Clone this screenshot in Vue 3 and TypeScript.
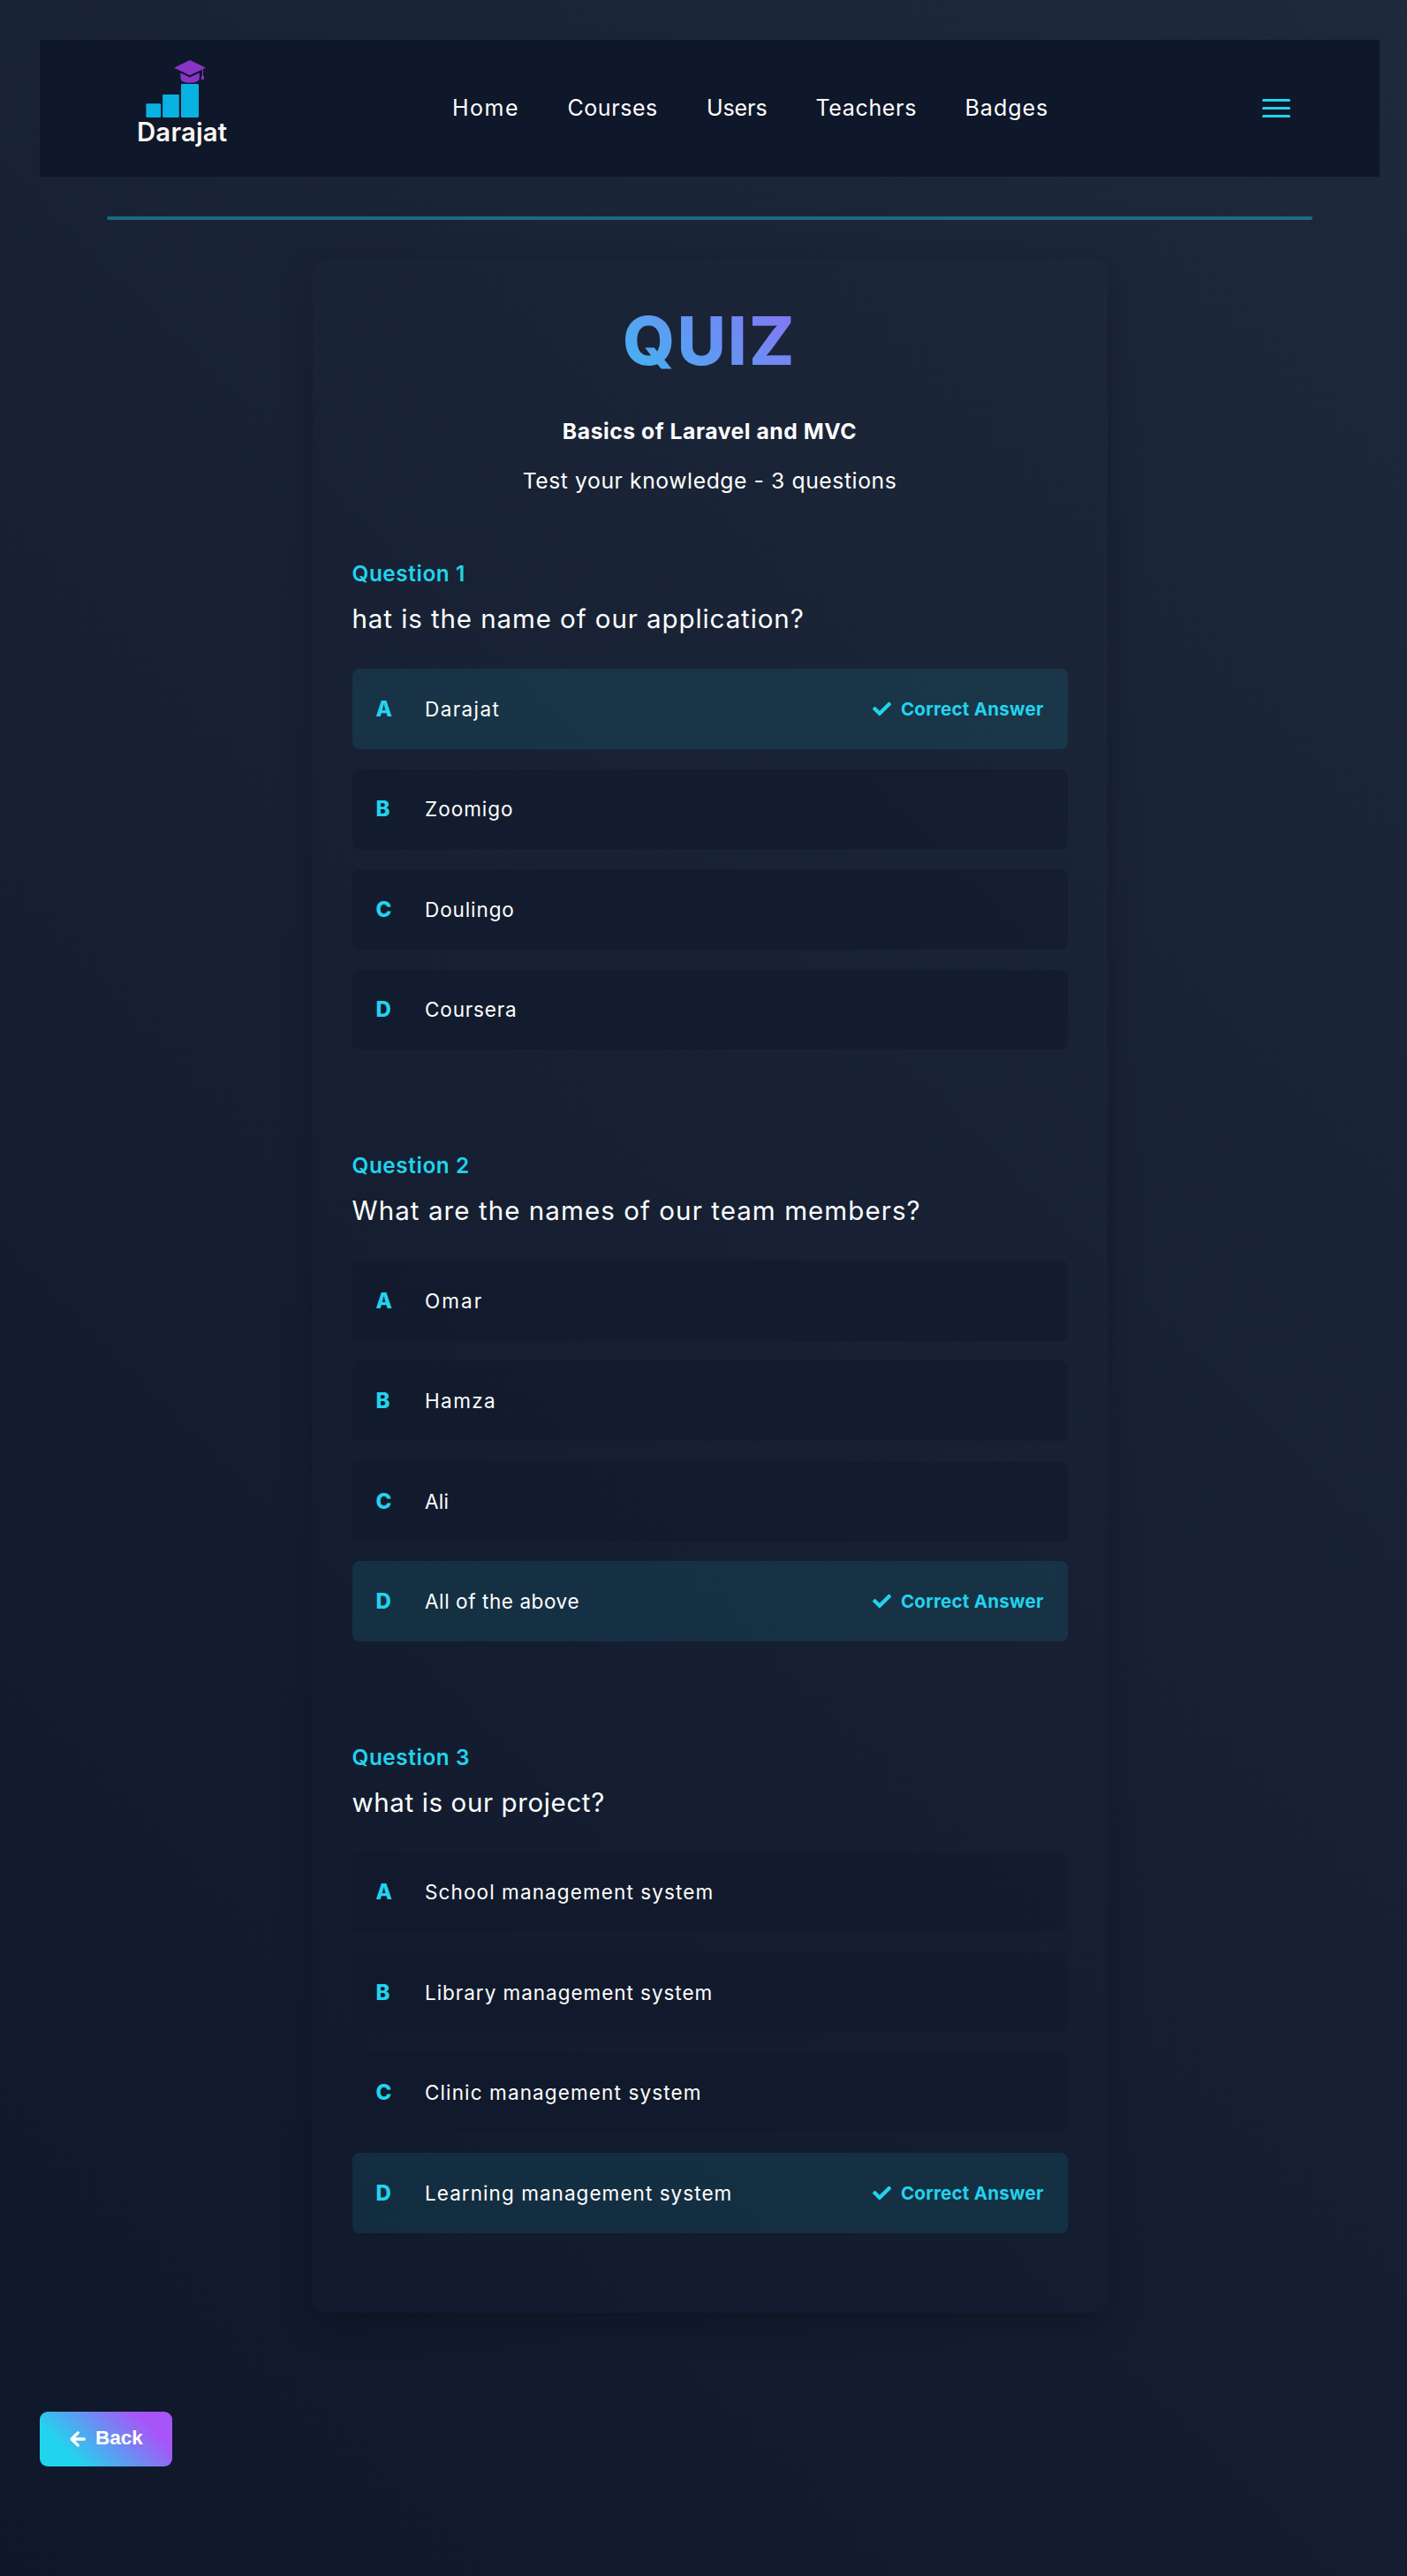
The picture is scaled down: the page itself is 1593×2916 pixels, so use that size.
<script setup lang="ts">
interface NavItem { label: string; width: number; spacing: number }
interface Option { text: string; spacing: number; correct?: boolean }
interface Question { text: string; spacing: number; options: Option[] }

const letters = ['A', 'B', 'C', 'D']

const nav: NavItem[] = [
  { label: 'Home', width: 74.5, spacing: 1.5 },
  { label: 'Courses', width: 101.5, spacing: 0.55 },
  { label: 'Users', width: 67.5, spacing: -0.1 },
  { label: 'Teachers', width: 113, spacing: 0.65 },
  { label: 'Badges', width: 96, spacing: 1.0 },
]

const questions: Question[] = [
  {
    text: 'hat is the name of our application?',
    spacing: 0.92,
    options: [
      { text: 'Darajat', spacing: 1.4, correct: true },
      { text: 'Zoomigo', spacing: 1.0 },
      { text: 'Doulingo', spacing: 0.9 },
      { text: 'Coursera', spacing: 0.85 },
    ],
  },
  {
    text: 'What are the names of our team members?',
    spacing: 1.08,
    options: [
      { text: 'Omar', spacing: 2.1 },
      { text: 'Hamza', spacing: 1.4 },
      { text: 'Ali', spacing: 0.3 },
      { text: 'All of the above', spacing: 0.58, correct: true },
    ],
  },
  {
    text: 'what is our project?',
    spacing: 0.62,
    options: [
      { text: 'School management system', spacing: 1.11 },
      { text: 'Library management system', spacing: 0.96 },
      { text: 'Clinic management system', spacing: 1.12 },
      { text: 'Learning management system', spacing: 1.05, correct: true },
    ],
  },
]
</script>

<template>
  <div class="page">
    <header class="navbar">
      <svg class="logo" width="104" height="104" viewBox="0 0 104 104">
        <g fill="#08b2e3">
          <rect x="8.4" y="49.3" width="16.7" height="15.7" rx="1.2" />
          <rect x="27.1" y="38.9" width="18.7" height="26.1" rx="1.2" />
          <rect x="48" y="27" width="20" height="38" rx="1.2" />
        </g>
        <g fill="#8834c6">
          <path d="M58 0 L76 8.7 L58 17.3 L40 8.7 Z" />
          <path d="M47.4 14.5 L58 19.6 L68.8 14.5 V20.5 Q68.8 25.6 58 25.8 Q47.4 25.6 47.4 20.5 Z" />
          <path d="M71.9 10.5 H73 V17.5 Q74.2 18 74 22 H70.9 Q70.7 18 71.9 17.5 Z" />
        </g>
        <text x="-2" y="92" class="logo-text">Darajat</text>
      </svg>
      <nav class="links">
        <a
          v-for="item in nav"
          :key="item.label"
          class="link"
          :style="{ width: item.width + 'px', letterSpacing: item.spacing + 'px' }"
        >{{ item.label }}</a>
      </nav>
      <div class="burger"><span></span><span></span><span></span></div>
    </header>

    <div class="divider"></div>

    <main class="card">
      <h1 class="title">QUIZ</h1>
      <div class="subtitle">Basics of Laravel and MVC</div>
      <div class="description">Test your knowledge - 3 questions</div>

      <div class="questions">
        <section v-for="(q, i) in questions" :key="q.text" class="question">
          <div class="number">Question {{ i + 1 }}</div>
          <div class="prompt" :style="{ letterSpacing: q.spacing + 'px' }">{{ q.text }}</div>
          <div class="options">
            <div
              v-for="(o, j) in q.options"
              :key="o.text"
              class="option"
              :class="{ correct: o.correct }"
            >
              <span class="letter">{{ letters[j] }}</span>
              <span class="text" :style="{ letterSpacing: o.spacing + 'px' }">{{ o.text }}</span>
              <span v-if="o.correct" class="badge">
                <svg class="check" width="21" height="21" viewBox="0 0 512 512">
                  <path fill="currentColor" d="M173.898 439.404l-166.4-166.4c-9.997-9.997-9.997-26.206 0-36.204l36.203-36.204c9.997-9.998 26.207-9.998 36.204 0L192 312.69 432.095 72.596c9.997-9.997 26.207-9.997 36.204 0l36.203 36.204c9.997 9.997 9.997 26.206 0 36.204l-294.4 294.401c-9.998 9.997-26.207 9.997-36.204-.001z" />
                </svg>
                Correct Answer
              </span>
            </div>
          </div>
        </section>
      </div>
    </main>

    <button class="back">
      <svg width="18" height="18" viewBox="0 0 18 18" fill="none" stroke="#fff" stroke-width="3.3" stroke-linecap="round" stroke-linejoin="round">
        <path d="M16.3 9H2.2M9.2 1.9L2.1 9l7.1 7.1" />
      </svg>
      <span>Back</span>
    </button>
  </div>
</template>

<style>
body {
  margin: 0;
  background: #0f172a;
}
</style>

<style scoped>
.page {
  box-sizing: border-box;
  width: 1593px;
  height: 2916px;
  padding: 45px 31px 0 45px;
  display: flex;
  flex-direction: column;
  background: linear-gradient(45deg, #0f172a, #1e293b);
  font-family: Inter, sans-serif;
  color: #fff;
}

.navbar {
  box-sizing: border-box;
  height: 155px;
  padding: 0 101px 0 112px;
  display: flex;
  align-items: center;
  background: #0f172a;
}

.logo {
  flex: none;
  align-self: flex-start;
  margin-top: 23px;
  overflow: visible;
}

.logo-text {
  font: 600 29.3px Inter, sans-serif;
  letter-spacing: 0.2px;
  fill: #fdf6ef;
}

.links {
  display: flex;
  gap: 56px;
  margin-left: 251px;
}

.link {
  font-size: 25px;
  line-height: 36px;
  padding-bottom: 1px;
  white-space: nowrap;
}

.burger {
  margin-left: auto;
  width: 32px;
  display: flex;
  flex-direction: column;
  gap: 6px;
}

.burger span {
  height: 3px;
  border-radius: 1.5px;
  background: #22d3ee;
}

.divider {
  width: 1365px;
  height: 4px;
  margin: 45px auto;
  border-radius: 2px;
  background: rgba(34, 211, 238, 0.4);
}

.card {
  box-sizing: border-box;
  width: 900px;
  height: 2323.7px;
  margin: 0 auto;
  padding: 45px;
  border-radius: 15px;
  box-shadow: 0 12px 36px rgba(0, 0, 0, 0.25);
}

.title {
  margin: 0;
  font-size: 75.7px;
  font-weight: 800;
  line-height: 93px;
  letter-spacing: 2.4px;
  text-align: center;
  background: linear-gradient(45deg, #22d3ee 20%, #a855f7 80%);
  -webkit-background-clip: text;
  background-clip: text;
  color: transparent;
}

.subtitle {
  margin-top: 38px;
  font-size: 24.7px;
  font-weight: 700;
  line-height: 36px;
  letter-spacing: 0.55px;
  text-align: center;
}

.description {
  margin-top: 20px;
  font-size: 24.7px;
  line-height: 36px;
  letter-spacing: 0.59px;
  text-align: center;
}

.questions {
  margin-top: 69px;
  display: flex;
  flex-direction: column;
  gap: 112.5px;
}

.number {
  font-size: 24.3px;
  font-weight: 600;
  line-height: 36px;
  letter-spacing: 0.6px;
  color: #22d3ee;
}

.prompt {
  margin-top: 11px;
  font-size: 29.5px;
  line-height: 44px;
  white-space: nowrap;
}

.options {
  margin-top: 35px;
  display: flex;
  flex-direction: column;
  gap: 22.75px;
}

.option {
  box-sizing: border-box;
  height: 90.75px;
  padding: 0 27px;
  display: flex;
  align-items: center;
  border-radius: 8px;
  background: rgba(15, 23, 42, 0.5);
}

.option.correct {
  background: rgba(34, 211, 238, 0.1);
}

.letter {
  width: 55.5px;
  font-size: 24px;
  font-weight: 800;
  color: #22d3ee;
}

.text {
  font-size: 22.5px;
  white-space: nowrap;
}

.badge {
  margin-left: auto;
  display: flex;
  align-items: center;
  font-size: 20.5px;
  font-weight: 700;
  letter-spacing: 0.26px;
  color: #22d3ee;
  white-space: nowrap;
}

.check {
  margin-right: 11px;
}

.back {
  margin: 112.3px 0 0;
  padding: 0 0 0 34px;
  width: 150px;
  height: 62px;
  flex: none;
  display: flex;
  align-items: center;
  gap: 11px;
  border: 0;
  border-radius: 9px;
  background: linear-gradient(45deg, #22d3ee 22%, #a855f7 80%);
  color: #fff;
  font: 700 22.5px "Liberation Sans", Arial, sans-serif;
}

.back span {
  padding-bottom: 2px;
}
</style>
